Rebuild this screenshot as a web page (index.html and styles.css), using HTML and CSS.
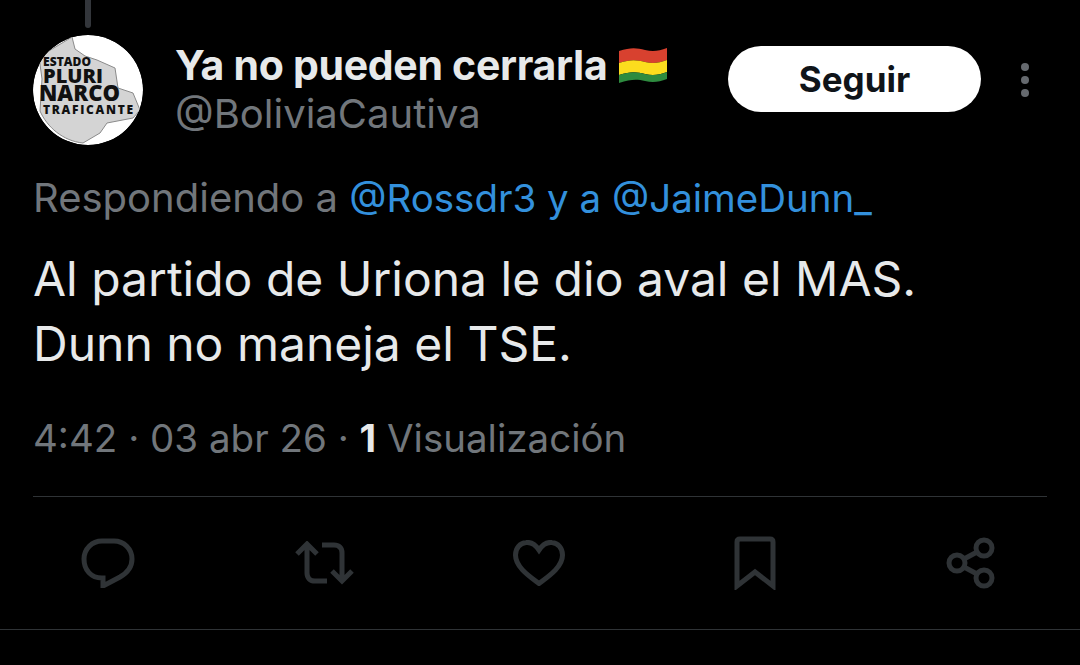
FILE: index.html
```html
<!DOCTYPE html>
<html lang="es">
<head>
  <meta charset="UTF-8">
  <meta name="viewport" content="width=device-width, initial-scale=1.0">
  <title>Ya no pueden cerrarla</title>
  <link rel="stylesheet" href="styles.css">
</head>
<body>
  <div class="thread-line"></div>

  <div class="header">
    <svg class="avatar" viewBox="0 0 110 110">
      <circle cx="55" cy="55" r="55" fill="#fff"/>
      <path d="M39 2 L42 14 L52 21 L64 25 L82 33 L85 53 L100 58 L107 75 L100 83 L74 88 L67 98 L50 108 C30 106 14 92 7 76 L9 44 L6 22 Z" fill="#d4d4d4" stroke="#8a8a8a" stroke-width="1"/>
      <text class="avatar-small" x="10" y="31" textLength="48">ESTADO</text>
      <text class="avatar-big" x="10" y="48">PLURI</text>
      <text class="avatar-bigger" x="6" y="66" textLength="81">NARCO</text>
      <text class="avatar-small" x="10" y="79" textLength="90">TRAFICANTE</text>
    </svg>
    <div class="names">
      <div class="name">Ya no pueden cerrarla
        <svg class="flag" viewBox="0 0 48 36">
          <path d="M0 4 C12 0 18 1 26 3 C34 5 40 4 48 1 V13 C40 16 34 17 26 15 C18 13 12 12 0 16 Z" fill="#d8412f"/>
          <path d="M0 16 C12 12 18 13 26 15 C34 17 40 16 48 13 V25 C40 28 34 29 26 27 C18 25 12 24 0 28 Z" fill="#fcdc1e"/>
          <path d="M0 28 C12 24 18 25 26 27 C34 29 40 28 48 25 V32 C40 35 34 36 26 34 C18 32 12 32 0 36 Z" fill="#2e8b3f"/>
        </svg>
      </div>
      <div class="handle">@BoliviaCautiva</div>
    </div>
    <button class="follow">Seguir</button>
    <div class="more"><span></span><span></span><span></span></div>
  </div>

  <div class="replying">Respondiendo a <a>@Rossdr3 y a @JaimeDunn_</a></div>

  <div class="tweet">Al partido de Uriona le dio aval el MAS.<br>Dunn no maneja el TSE.</div>

  <div class="meta">4:42 · 03 abr 26 · <b>1</b> Visualización</div>

  <div class="actions">
    <svg class="icon icon-reply" viewBox="0 0 54 50">
      <path d="M21 3 H33 C43 3 51 11 51 21 C51 30 46 35 39 39 L22 48 V40 H21 C10 40 3 32 3 21 C3 11 11 3 21 3 Z"/>
    </svg>
    <svg class="icon icon-repost" viewBox="0 0 60 44">
      <path d="M3 13 L13 3 L23 13 M13 4 V32 C13 37 16 40 21 40 H33"/>
      <path d="M28 4 H40 C45 4 48 7 48 12 V39 M38 30 L48 40 L58 30"/>
    </svg>
    <svg class="icon icon-like" viewBox="0 0 52 46">
      <path d="M26 10 C22 4 17 2 13 2.500 C7 3 2.500 8 2.500 15 C2.500 27 16 36 26 43.500 C36 36 49.500 27 49.500 15 C49.500 8 45 3 39 2.500 C35 2 30 4 26 10 Z"/>
    </svg>
    <svg class="icon icon-save" viewBox="0 0 42 54">
      <path d="M3 50 V6 C3 4 4 3 6 3 H36 C38 3 39 4 39 6 V50 L21 36 Z"/>
    </svg>
    <svg class="icon icon-share" viewBox="0 0 50 52">
      <circle cx="38" cy="11" r="8"/>
      <circle cx="11" cy="26" r="8"/>
      <circle cx="38" cy="41" r="8"/>
      <path d="M18 22 L31 15 M18 30 L31 37"/>
    </svg>
  </div>

  <div class="bottom-line"></div>
</body>
</html>
```

FILE: styles.css
```css
body { margin: 0; background: #000; font-family: Inter, sans-serif; color: #e7e9ea; overflow: hidden; }
.thread-line { width: 6px; height: 28px; margin-left: 85px; background: #33363b; border-radius: 0 0 3px 3px; }

.header { display: flex; align-items: flex-start; padding: 7px 0 0 33px; }
.avatar { width: 110px; height: 110px; flex: none; border-radius: 50%; }
.avatar-small { font: 800 12px "Open Sans", sans-serif; fill: #111; }
.avatar-big { font: 800 20px "Open Sans", sans-serif; fill: #111; }
.avatar-bigger { font: 800 22px "Open Sans", sans-serif; fill: #111; }
.names { margin-left: 32px; width: 553px; padding-top: 6px; }
.name { font-size: 41px; font-weight: 700; line-height: 48px; color: #e7e9ea; white-space: nowrap; letter-spacing: -0.3px; }
.flag { width: 48px; height: 36px; vertical-align: -3px; margin-left: 2px; }
.handle { font-size: 40px; line-height: 44px; color: #71767b; margin-top: 3px; }
.follow { width: 253px; height: 66px; margin-top: 11px; background: #fff; color: #0f1419; border: none; border-radius: 33px; font: 700 35px Inter, sans-serif; padding: 0; }
.more { display: flex; flex-direction: column; gap: 5px; margin: 28px 0 0 40px; }
.more span { width: 8px; height: 8px; border-radius: 50%; background: #666a6f; }

.replying { margin: 31px 0 0 33px; font-size: 40px; line-height: 44px; color: #71767b; }
.replying a { color: #3390dc; font-size: 38.500px; }
.tweet { margin: 26px 0 0 33px; font-size: 48px; line-height: 65px; color: #e7e9ea; }
.meta { margin: 40px 33px 0 33px; padding: 0 0 36px 0; font-size: 38.500px; line-height: 44px; color: #71767b; border-bottom: 1px solid #2f3336; }
.meta b { color: #e7e9ea; font-weight: 700; }

.actions { display: grid; grid-template-columns: repeat(5, 1fr); justify-items: center; align-items: center; height: 132px; padding-right: 1px; }
.icon { fill: none; stroke: #2f3336; stroke-width: 5; }
.icon-reply { width: 54px; height: 50px; }
.icon-repost { width: 60px; height: 44px; }
.icon-like { width: 52px; height: 46px; }
.icon-save { width: 42px; height: 54px; }
.icon-share { width: 50px; height: 52px; }
.bottom-line { border-top: 1px solid #2f3336; }
```
